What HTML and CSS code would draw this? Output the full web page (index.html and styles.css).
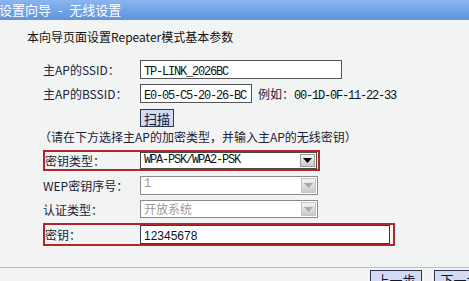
FILE: index.html
```html
<!DOCTYPE html>
<html>

<head>
  <meta charset="UTF-8">
  <title>设置向导 - 无线设置</title>
  <link rel="stylesheet" href="styles.css">
</head>

<body>
  <div class="titlebar">设置向导 - 无线设置</div>
  <p class="intro">本向导页面设置Repeater模式基本参数</p>

  <div class="form">
    <div class="row row-ssid">
      <span class="label">主AP的SSID：</span>
      <div class="field field-ssid"><span class="mono">TP-LINK_2026BC</span></div>
    </div>
    <div class="row row-bssid">
      <span class="label">主AP的BSSID：</span>
      <div class="field field-bssid"><span class="mono">E0-05-C5-20-26-BC</span></div>
      <span class="hint">例如：<span class="mono">00-1D-0F-11-22-33</span></span>
    </div>
    <div class="row row-scan">
      <span class="label"></span>
      <button class="btn btn-scan">扫描</button>
    </div>
    <p class="note">（请在下方选择主AP的加密类型，并输入主AP的无线密钥）</p>

    <div class="row mark mark-type">
      <span class="label">密钥类型：</span>
      <div class="select">
        <span class="value mono">WPA-PSK/WPA2-PSK</span>
        <span class="arrow"><svg width="9" height="5" viewBox="0 0 9 5"><path d="M0 0h9L4.5 5z" fill="#000"/></svg></span>
      </div>
    </div>
    <div class="row row-wep">
      <span class="label">WEP密钥序号：</span>
      <div class="select disabled">
        <span class="value mono">1</span>
        <span class="arrow"><svg width="9" height="5" viewBox="0 0 9 5"><path d="M0 0h9L4.5 5z" fill="#a8a8a8"/></svg></span>
      </div>
    </div>
    <div class="row row-auth">
      <span class="label">认证类型：</span>
      <div class="select disabled">
        <span class="value">开放系统</span>
        <span class="arrow"><svg width="9" height="5" viewBox="0 0 9 5"><path d="M0 0h9L4.5 5z" fill="#a8a8a8"/></svg></span>
      </div>
    </div>
    <div class="row mark mark-key">
      <span class="label">密钥：</span>
      <div class="field field-key"><span class="digits">12345678</span></div>
    </div>
  </div>

  <div class="separator"></div>
  <div class="actions">
    <button class="btn btn-step">上一步</button>
    <button class="btn btn-step">下一步</button>
  </div>
</body>

</html>
```

FILE: styles.css
```css
* {
  margin: 0;
  padding: 0;
  box-sizing: border-box;
}

body {
  background: #f2f3f3;
  color: #1a2238;
  font-family: "Noto Sans CJK SC", "Noto Sans", sans-serif;
  font-size: 12px;
  width: 469px;
  height: 281px;
  overflow: hidden;
}

.titlebar {
  height: 20px;
  line-height: 19px;
  background: linear-gradient(#8ab5ef, #5f93de);
  color: #fff;
  font-size: 13px;
  text-indent: -1px;
  word-spacing: 4px;
  white-space: pre;
}

.intro {
  margin: 9px 0 0 27px;
  line-height: 16px;
  color: #111;
}

.form {
  margin: 15px 0 0 43px;
}

.row {
  display: flex;
  align-items: center;
  height: 19px;
}

.label {
  width: 97px;
  flex: none;
  white-space: nowrap;
}

.mono {
  font-family: "Liberation Mono", monospace;
  letter-spacing: -1.2px;
  color: #111;
}

.digits {
  font-family: "Liberation Sans", sans-serif;
  color: #111;
}

.field {
  height: 19px;
  background: #fff;
  border: 1px solid #555;
  padding: 0 3px;
  line-height: 17px;
  white-space: nowrap;
  overflow: hidden;
}

.field-ssid {
  width: 202px;
}

.field-bssid {
  width: 112px;
}

.hint {
  margin-left: 6px;
  white-space: nowrap;
}

.row-bssid {
  margin-top: 5px;
}

.row-scan {
  margin-top: 6px;
  height: 18px;
}

.btn {
  font-family: "Noto Sans CJK SC", sans-serif;
  background: #d4daf3;
  border: 1px solid #30364a;
  color: #101830;
  cursor: pointer;
}

.btn-scan {
  width: 34px;
  height: 18px;
  font-size: 13px;
  line-height: 15px;
}

.note {
  margin: 3px 0 0 -4px;
  line-height: 14px;
  white-space: nowrap;
}

.mark {
  border: 2px solid #b3252d;
}

.mark .label {
  width: 95px;
}

.mark-type {
  margin-top: 6px;
  width: 277px;
  height: 21px;
  padding-right: 1px;
}

.mark-type .select {
  width: 177px;
  height: 17px;
}

.select {
  display: flex;
  width: 178px;
  height: 19px;
  background: #fff;
  border: 1px solid #4a4a4a;
}

.select .value {
  flex: 1;
  padding-left: 3px;
  line-height: 15px;
  white-space: nowrap;
}

.select .arrow {
  width: 15px;
  display: flex;
  align-items: center;
  justify-content: center;
  background: linear-gradient(#f4f4f4, #c9c9c9);
  border: 1px solid #9a9a9a;
  margin: 1px;
}

.select.disabled {
  border-color: #8a8a8a;
}

.select.disabled .value {
  color: #9a9a9a;
}

.select.disabled .arrow {
  border-color: #c4c4c4;
}

.row-wep {
  margin-top: 5px;
}

.row-auth {
  margin-top: 5px;
  height: 18px;
}

.row-auth .select {
  height: 18px;
}

.mark-key {
  margin-top: 5px;
  width: 352px;
  height: 23px;
  padding-right: 3px;
}

.field-key {
  width: 250px;
  border-color: #3a3a5a;
}

.separator {
  margin-top: 21px;
  height: 1px;
  background: #e2b57e;
}

.actions {
  display: flex;
  gap: 12px;
  margin: 2px 0 0 370px;
}

.btn-step {
  width: 52px;
  height: 18px;
  font-size: 13px;
  line-height: 15px;
  flex: none;
}
```
